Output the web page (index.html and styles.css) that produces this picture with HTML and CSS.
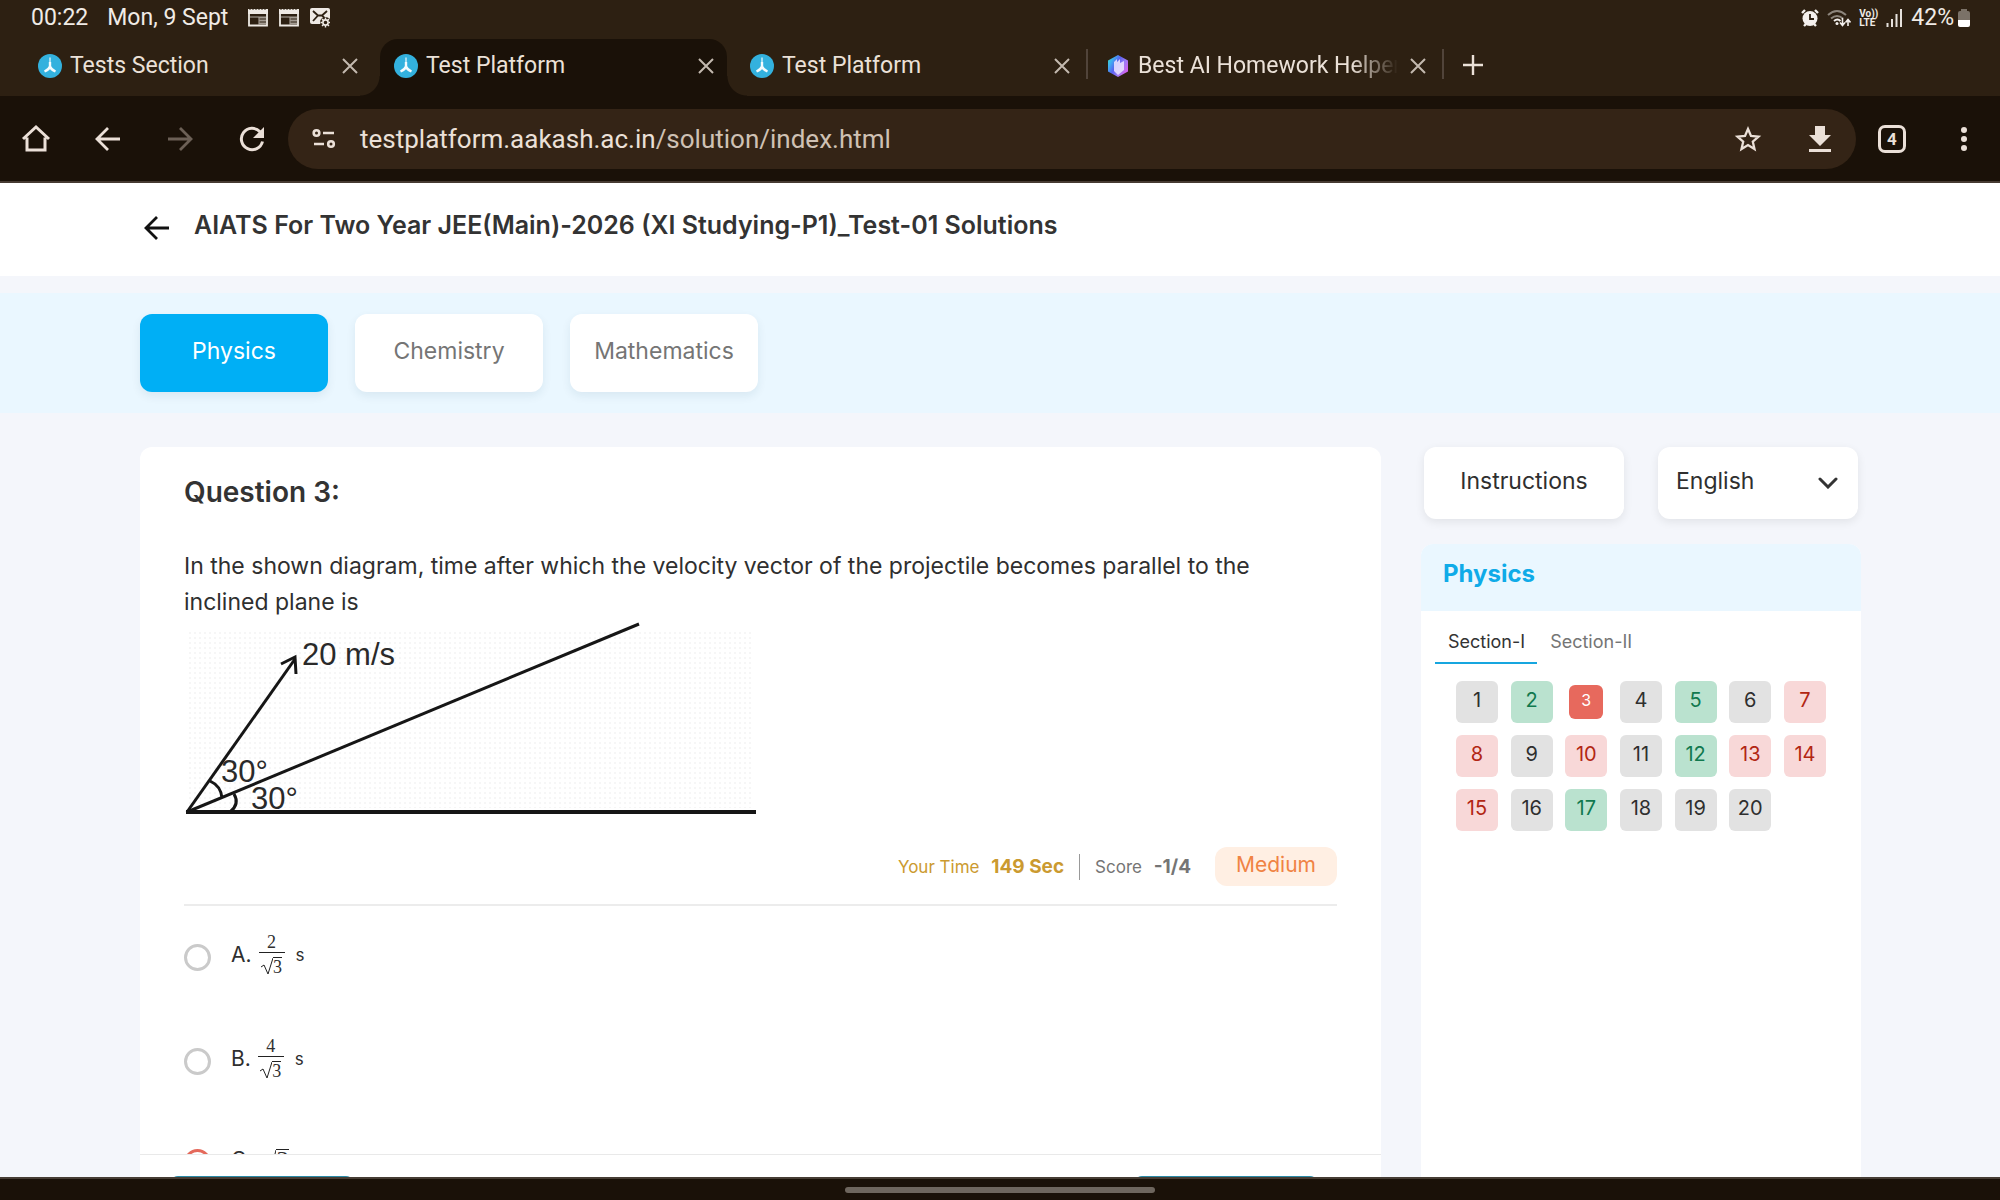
FILE: index.html
```html
<!DOCTYPE html>
<html lang="en">
<head>
<meta charset="utf-8">
<title>Test Platform</title>
<link rel="stylesheet" href="styles.css">
</head>
<body>
<svg class="defs" aria-hidden="true">
  <defs>
    <symbol id="favicon" viewBox="0 0 24 24">
      <circle cx="12" cy="12" r="12" fill="#33b1de"/>
      <path d="M12 3.500v9" stroke="#a5def2" stroke-width="2" fill="none"/>
      <path d="M12 8v4.500q-1 3-5.500 5M12 12.500q1 3 5.500 5" stroke="#f4fbfe" stroke-width="2.400" fill="none"/>
    </symbol>
    <symbol id="close" viewBox="0 0 24 24">
      <path d="M5 5l14 14M19 5L5 19" stroke="currentColor" stroke-width="2" fill="none"/>
    </symbol>
    <symbol id="note" viewBox="0 0 20 20">
      <path d="M0 1h20v5H0z" fill="#eee9e4"/>
      <path d="M2 0v2M5 0v2M8 0v2M11 0v2M14 0v2M17 0v2" stroke="#2d2012" stroke-width="1"/>
      <path d="M1 5v12.500h18V5" stroke="#eee9e4" stroke-width="1.800" fill="none"/>
      <path d="M2 9h9v8" stroke="#b5ada5" stroke-width="1" fill="none"/>
      <path d="M11 9.500h7M11 12.500h7M11 15.500h7" stroke="#a39b92" stroke-width="1.800"/>
    </symbol>
  </defs>
</svg>

<header class="status">
  <span>00:22</span>
  <span class="date">Mon, 9 Sept</span>
  <svg class="s-icon" viewBox="0 0 20 20"><use href="#note"/></svg>
  <svg class="s-icon" viewBox="0 0 20 20"><use href="#note"/></svg>
  <svg class="s-icon" viewBox="0 0 20 20">
    <rect width="20" height="16" rx="2" fill="#eee9e4"/>
    <path d="M3 3l5 4.500h4L17 3M3 13l5-5.500M12 7.500l3 3" stroke="#2d2012" stroke-width="1.800" fill="none"/>
    <circle cx="15.500" cy="14.500" r="5.500" fill="#2d2012"/>
    <circle cx="15.500" cy="14.500" r="2.600" fill="none" stroke="#eee9e4" stroke-width="1.600"/>
    <path d="M15.500 9.500v2M15.500 17.500v2M10.500 14.500h2M18.500 14.500h2M12 11l1.500 1.500M19 11l-1.500 1.500M12 18l1.500-1.500M19 18l-1.500-1.500" stroke="#eee9e4" stroke-width="1.400"/>
  </svg>
  <div class="status-right">
    <svg width="18" height="18" viewBox="0 0 18 18"><circle cx="9" cy="9.500" r="7.500" fill="#f4f0ed"/><path d="M1 4l3-3M17 4l-3-3M3 17l2-2M15 17l-2-2" stroke="#f4f0ed" stroke-width="2.400"/><path d="M9 5v5h4" stroke="#2d2012" stroke-width="1.800" fill="none"/></svg>
    <svg width="24" height="18" viewBox="0 0 24 18"><path d="M1 6q9-8 18 0M4 9.500q6-5 12 0" stroke="#8d857c" stroke-width="2" fill="none"/><path d="M7 12q3.500-3 6.500 0" stroke="#f4f0ed" stroke-width="2" fill="none"/><circle cx="10" cy="14.500" r="1.500" fill="#f4f0ed"/><path d="M15.500 9v7M13 13.500l2.500 3 2.500-3M21 17v-6M18.500 13.500l2.500-3 2.500 3" stroke="#f4f0ed" stroke-width="1.600" fill="none"/></svg>
    <span class="volte"><span>Vo))</span><span>LTE</span></span>
    <svg width="17" height="18" viewBox="0 0 17 18"><path d="M1.500 14v4M6 10v8M10.500 5v13M15 0v18" stroke="#e6e1dc" stroke-width="2"/></svg>
    <span class="battery">42%<svg width="12" height="18" viewBox="0 0 12 18"><path d="M3 0h6v2h1a2 2 0 0 1 2 2v8H0V4a2 2 0 0 1 2-2h1z" fill="#7b7268"/><path d="M0 11h12v5a2 2 0 0 1-2 2H2a2 2 0 0 1-2-2z" fill="#fff"/></svg></span>
  </div>
</header>

<nav class="tabs" aria-label="Open tabs">
  <div class="tab"><svg class="fav"><use href="#favicon"/></svg><span>Tests Section</span><button aria-label="Close tab"><svg><use href="#close"/></svg></button></div>
  <div class="tab active"><svg class="fav"><use href="#favicon"/></svg><span>Test Platform</span><button aria-label="Close tab"><svg><use href="#close"/></svg></button></div>
  <div class="tab lined"><svg class="fav"><use href="#favicon"/></svg><span>Test Platform</span><button aria-label="Close tab"><svg><use href="#close"/></svg></button></div>
  <div class="tab lined">
    <svg class="fav" viewBox="0 0 24 24">
      <defs><linearGradient id="gem" x1="0" y1="0" x2="1" y2=".6"><stop offset="0" stop-color="#35e8b0"/><stop offset=".25" stop-color="#3fb0f0"/><stop offset=".5" stop-color="#5a62f0"/><stop offset=".75" stop-color="#9a7bf5"/><stop offset="1" stop-color="#cf62ee"/></linearGradient></defs>
      <path d="M12 1l10 5.500v11L12 23 2 17.500v-11z" fill="url(#gem)"/>
      <path d="M8 8l3-3v3l3-3v4l4-2v9l-6 5-4-4z" fill="#e8e0ff" opacity=".9"/>
    </svg><span class="fade">Best AI Homework Helper</span><button aria-label="Close tab"><svg><use href="#close"/></svg></button></div>
  <button class="new" aria-label="New tab"><svg width="22" height="22" viewBox="0 0 22 22"><path d="M11 1v20M1 11h20" stroke="currentColor" stroke-width="2.400"/></svg></button>
</nav>

<div class="toolbar">
  <button aria-label="Home"><svg viewBox="0 0 32 32"><path d="M7 14.500V27h18V14.500M3 16L16 4l13 12" fill="none" stroke="currentColor" stroke-width="3"/></svg></button>
  <button aria-label="Back"><svg viewBox="0 0 32 32"><path d="M28 16H6M16 5L5 16l11 11" fill="none" stroke="currentColor" stroke-width="2.800"/></svg></button>
  <button class="off" aria-label="Forward" disabled><svg viewBox="0 0 32 32"><path d="M4 16h22M16 5l11 11-11 11" fill="none" stroke="currentColor" stroke-width="2.800"/></svg></button>
  <button aria-label="Reload"><svg viewBox="0 0 32 32"><path d="M26.500 18.500A10.700 10.700 0 1 1 24 8.800" fill="none" stroke="currentColor" stroke-width="3"/><path d="M28 4v11H17z" fill="currentColor"/></svg></button>
  <div class="omnibox">
    <button aria-label="Site information"><svg viewBox="0 0 32 32"><g fill="none" stroke="currentColor" stroke-width="2.600"><circle cx="8.500" cy="10" r="2.800"/><path d="M15 10h11M6 21h10"/><circle cx="23" cy="21" r="2.800"/></g></svg></button>
    <span class="url">testplatform.aakash.ac.in<span>/solution/index.html</span></span>
    <button aria-label="Bookmark"><svg viewBox="0 0 32 32"><path d="M16 6l3 7 7.500.700-5.700 5 1.700 7.300-6.500-3.900L9.500 26l1.700-7.300-5.700-5L13 13z" fill="none" stroke="currentColor" stroke-width="2.300"/></svg></button>
    <button aria-label="Downloads"><svg viewBox="0 0 32 32"><path d="M11 3h10v9h6L16 23 5 12h6zM5 26h22v3H5z" fill="currentColor"/></svg></button>
  </div>
  <button aria-label="Switch tabs"><span class="count">4</span></button>
  <button aria-label="Menu"><svg viewBox="0 0 32 32"><g fill="currentColor"><circle cx="16" cy="7" r="3"/><circle cx="16" cy="16" r="3"/><circle cx="16" cy="25" r="3"/></g></svg></button>
</div>

<div class="page">
  <div class="title-bar">
    <a href="#" aria-label="Back to tests"><svg width="26" height="26" viewBox="0 0 26 26"><path d="M25 13H3M13 2L2 13l11 11" fill="none" stroke="#111" stroke-width="2.800"/></svg></a>
    <h1>AIATS For Two Year JEE(Main)-2026 (XI Studying-P1)_Test-01 Solutions</h1>
  </div>
  <div class="subjects">
    <button class="on">Physics</button>
    <button>Chemistry</button>
    <button>Mathematics</button>
  </div>
  <div class="content">
    <main class="card">
      <div class="scroll">
        <h2>Question 3:</h2>
        <p class="question">In the shown diagram, time after which the velocity vector of the projectile becomes parallel to the inclined plane is</p>
        <svg class="diagram" viewBox="0 0 572 193" role="img" aria-label="Projectile thrown at 30 degrees above a 30 degree incline">
          <defs><pattern id="dots" width="5" height="5" patternUnits="userSpaceOnUse"><rect width="2" height="2" fill="#f6f6f6"/></pattern></defs>
          <rect x="3" y="10" width="566" height="176" fill="url(#dots)"/>
          <g fill="none" stroke="#161616" stroke-width="3">
            <path d="M3 190L111 37"/><path d="M3 190L455 2"/>
            <path d="M97 42L111 35l1 17"/>
            <path d="M26 159q11 5 12 17M50 172q6 10-4 18"/>
            <path d="M2 190h570" stroke-width="4"/>
          </g>
          <g class="labels"><text x="118" y="43">20 m/s</text><text x="37" y="160">30°</text><text x="67" y="187">30°</text></g>
        </svg>
        <div class="stats">
          <span class="time">Your Time <b>149 Sec</b></span>
          <span class="score">Score <b>-1/4</b></span>
          <span class="level">Medium</span>
        </div>
        <div class="options">
          <label><input type="radio" name="answer"><span>A.</span><span class="frac"><i>2</i><i><svg class="surd" viewBox="0 0 12 18"><path d="M0 10l3-2 4 9L12 1" fill="none" stroke="#222" stroke-width="1"/></svg><u>3</u></i></span><em>s</em></label>
          <label><input type="radio" name="answer"><span>B.</span><span class="frac"><i>4</i><i><svg class="surd" viewBox="0 0 12 18"><path d="M0 10l3-2 4 9L12 1" fill="none" stroke="#222" stroke-width="1"/></svg><u>3</u></i></span><em>s</em></label>
          <label><input class="wrong" type="radio" name="answer"><span>C.</span><span class="root"><svg viewBox="0 0 12 22"><path d="M0 12l3-2 4 11L12 1" fill="none" stroke="#222" stroke-width="1"/></svg><u>3</u></span><em>s</em></label>
        </div>
      </div>
      <div class="pager"><button aria-label="Previous question"></button><button aria-label="Next question"></button></div>
    </main>
    <aside class="side">
      <div class="side-top">
        <button>Instructions</button>
        <div class="lang"><select aria-label="Language"><option>English</option></select><svg width="20" height="12" viewBox="0 0 20 12"><path d="M2 2l8 8 8-8" fill="none" stroke="#333" stroke-width="3" stroke-linecap="round"/></svg></div>
      </div>
      <section class="panel">
        <h3>Physics</h3>
        <div class="sections"><button class="on">Section-I</button><button>Section-II</button></div>
        <div class="grid">
          <button>1</button><button class="ok">2</button><button class="now">3</button><button>4</button><button class="ok">5</button><button>6</button><button class="bad">7</button>
          <button class="bad">8</button><button>9</button><button class="bad">10</button><button>11</button><button class="ok">12</button><button class="bad">13</button><button class="bad">14</button>
          <button class="bad">15</button><button>16</button><button class="ok">17</button><button>18</button><button>19</button><button>20</button>
        </div>
      </section>
    </aside>
  </div>
</div>
<footer class="gesture"><span></span></footer>
</body>
</html>
```
FILE: styles.css
```css
* { box-sizing: border-box; }
body {
  margin: 0;
  height: 100vh;
  display: flex;
  flex-direction: column;
  overflow: hidden;
  background: #1a1108;
  color: #2f2f2f;
  font-family: Inter, "Liberation Sans", sans-serif;
}
button, select { font: inherit; color: inherit; border: 0; padding: 0; margin: 0; background: none; }
h1, h2, h3, p { margin: 0; }
.defs { position: absolute; width: 0; height: 0; }

.status {
  display: flex;
  align-items: center;
  gap: 11px;
  height: 36px;
  padding: 0 30px 0 31px;
  background: #2d2012;
  color: #f0ebe6;
  font: 23px/36px Roboto, sans-serif;
}
.status .date { margin: 0 9px 0 8px; }
.s-icon { width: 20px; height: 20px; }
.status-right { display: flex; align-items: center; gap: 8px; margin-left: auto; }
.volte { display: grid; font: bold 10px/9px Roboto, sans-serif; }
.battery { display: flex; align-items: center; gap: 4px; }

.tabs {
  display: flex;
  height: 60px;
  padding: 3px 0 0 24px;
  background: #2d2012;
  color: #ebe1d8;
  font: 23px/54px Roboto, sans-serif;
}
.tab { position: relative; display: flex; align-items: center; gap: 8px; width: 356px; padding: 0 18px 3px 14px; height: 57px; white-space: nowrap; }
.tab span { flex: 1; overflow: hidden; }
.tab .fade { -webkit-mask-image: linear-gradient(90deg, #000 82%, transparent); mask-image: linear-gradient(90deg, #000 82%, transparent); }
.fav { width: 24px; height: 24px; }
.tab button { width: 24px; height: 24px; color: #c3b9af; line-height: 0; }
.tab button svg { width: 24px; height: 24px; }
.tab.active { width: 347px; margin-right: 9px; padding-right: 9px; border-radius: 18px 18px 0 0; background: #1a1108; }
.tab.active::before, .tab.active::after { content: ""; position: absolute; bottom: 0; width: 20px; height: 20px; }
.tab.active::before { right: 100%; background: radial-gradient(circle at 0 0, transparent 19px, #1a1108 20px); }
.tab.active::after { left: 100%; background: radial-gradient(circle at 100% 0, transparent 19px, #1a1108 20px); }
.tab.lined::after { content: ""; position: absolute; right: 4px; top: 10px; width: 2px; height: 30px; background: #51443a; }
.new { height: 52px; margin-left: 14px; line-height: 0; }

.toolbar { display: flex; align-items: center; height: 87px; flex: none; border-bottom: 2px solid #463b32; color: #ebe0d8; }
.toolbar button { width: 72px; height: 60px; display: grid; place-items: center; flex: none; }
.toolbar button svg { width: 32px; height: 32px; }
.toolbar .off { color: #6c6056; }
.omnibox { flex: 1; display: flex; align-items: center; height: 60px; border-radius: 30px; background: #342416; }
.url { flex: 1; font: 26px/60px Roboto, sans-serif; }
.url span { color: #cfc1b4; }
.count { width: 28px; height: 28px; border: 3px solid currentColor; border-radius: 7px; font: bold 17px/22px Roboto, sans-serif; text-align: center; }

.page { flex: 1; min-height: 0; display: flex; flex-direction: column; background: #f4f6fb; }
.title-bar { display: flex; align-items: center; gap: 24px; height: 93px; padding: 0 7% 4px; background: #fff; flex: none; }
.title-bar a { display: block; height: 26px; margin-left: 4px; }
.title-bar h1 { padding-bottom: 6px; font-size: 25px; line-height: 36px; font-weight: 600; color: #333; }
.subjects { display: flex; gap: 27px; flex: none; margin-top: 17px; padding: 21px 7%; background: #eaf7ff; }
.subjects button { width: 188px; height: 78px; padding-bottom: 4px; border-radius: 12px; background: #fff; color: #757575; font-size: 23px; box-shadow: 0 4px 10px rgba(0, 60, 90, .08); }
.subjects .on { background: #00aff5; color: #fff; }

.content { flex: 1; min-height: 0; display: flex; gap: 40px; padding: 34px 139px 0 7%; }
.card { flex: 1; display: flex; flex-direction: column; border-radius: 12px 12px 0 0; background: #fff; }
.scroll { flex: 1; min-height: 0; overflow: hidden; padding: 25px 44px 0; }
.card h2 { font-size: 28px; line-height: 40px; font-weight: 600; color: #333; }
.question { margin-top: 36px; padding-right: 24px; font-size: 23px; line-height: 36px; }
.diagram { display: block; width: 572px; height: 193px; margin-top: 2px; }
.labels { font: 31px "Liberation Sans", sans-serif; fill: #2a2a2a; }
.stats { display: flex; align-items: center; justify-content: flex-end; height: 91px; padding-top: 14px; border-bottom: 2px solid #ececec; }
.stats span { font-size: 17px; line-height: 26px; }
.stats b { margin-left: 7px; font-size: 19px; }
.stats .time { color: #cb9a30; padding-right: 15px; }
.stats .score { color: #757575; padding: 0 24px 0 15px; border-left: 1px solid #999; }
.stats .level { padding: 5px 21px 8px; border-radius: 12px; background: #ffefe3; color: #f08344; font-size: 21px; }
.options label { display: flex; align-items: center; height: 104px; padding-bottom: 6px; }
.options label:last-child { height: 98px; }
.options input { appearance: none; flex: none; width: 27px; height: 27px; margin: 4px 20px 0 0; border: 3px solid #cacaca; border-radius: 50%; }
.options .wrong { border-color: #e4695b; }
.options span { font-size: 21px; line-height: 26px; }
.options em { margin-left: 11px; font-size: 17px; font-style: normal; }
.options .frac { display: grid; width: 26px; margin-left: 7px; text-align: center; }
.frac i { font: 18px/19px "Liberation Serif", serif; display: flex; justify-content: center; }
.frac i + i { border-top: 1px solid #222; padding-top: 4px; }
.options u { text-decoration: none; border-top: 1px solid #222; font-family: "Liberation Serif", serif; }
.surd { width: 12px; height: 18px; }
.options .root { display: flex; margin-left: 12px; font-size: 24px; line-height: 18px; }
.root svg { width: 12px; height: 22px; }
.root u { height: 22px; padding-right: 1px; }
.pager { display: flex; justify-content: space-between; height: 23px; flex: none; padding: 21px 63px 0 30px; border-top: 1px solid #e9e9e9; overflow: hidden; }
.pager button { width: 184px; height: 56px; border-radius: 8px; background: #2a8ba8; }

.side { width: 440px; display: flex; flex-direction: column; }
.side-top { display: flex; justify-content: space-between; padding: 0 3px; }
.side-top button, .lang { width: 200px; height: 72px; border-radius: 12px; background: #fff; font-size: 23px; box-shadow: 0 3px 10px rgba(0, 0, 0, .08); }
.side-top button { padding-bottom: 4px; }
.lang { display: flex; align-items: center; padding-right: 20px; }
.lang select { appearance: none; flex: 1; padding: 0 0 4px 18px; height: 72px; }
.panel { flex: 1; margin-top: 25px; border-radius: 12px 12px 0 0; background: #fff; overflow: hidden; }
.panel h3 { padding: 10px 22px 17px; background: #eaf7ff; color: #0fabe8; font-size: 24px; line-height: 40px; font-weight: 700; }
.sections { display: flex; padding: 18px 14px 0; }
.sections button { padding: 0 12px 7px 13px; font-size: 18px; line-height: 26px; color: #757575; border-bottom: 2px solid transparent; }
.sections .on { color: #333; border-color: #16a6df; }
.grid { display: grid; grid-template-columns: repeat(7, 42px); justify-content: space-between; row-gap: 12px; padding: 17px 35px; }
.grid button { height: 42px; padding-bottom: 4px; border-radius: 6px; background: #e2e2e2; color: #2f2f2f; font-size: 20px; }
.grid .ok { background: #bae2cf; color: #11794e; }
.grid .bad { background: #f8d8d8; color: #b22613; }
.grid .now { width: 34px; height: 34px; place-self: center; background: #e7695d; color: #fff; font-size: 16px; }

.gesture { flex: none; display: grid; place-items: center; height: 23px; border-top: 2px solid #463d34; background: #1a1108; }
.gesture span { width: 310px; height: 6px; border-radius: 3px; background: #6e665e; }
```
